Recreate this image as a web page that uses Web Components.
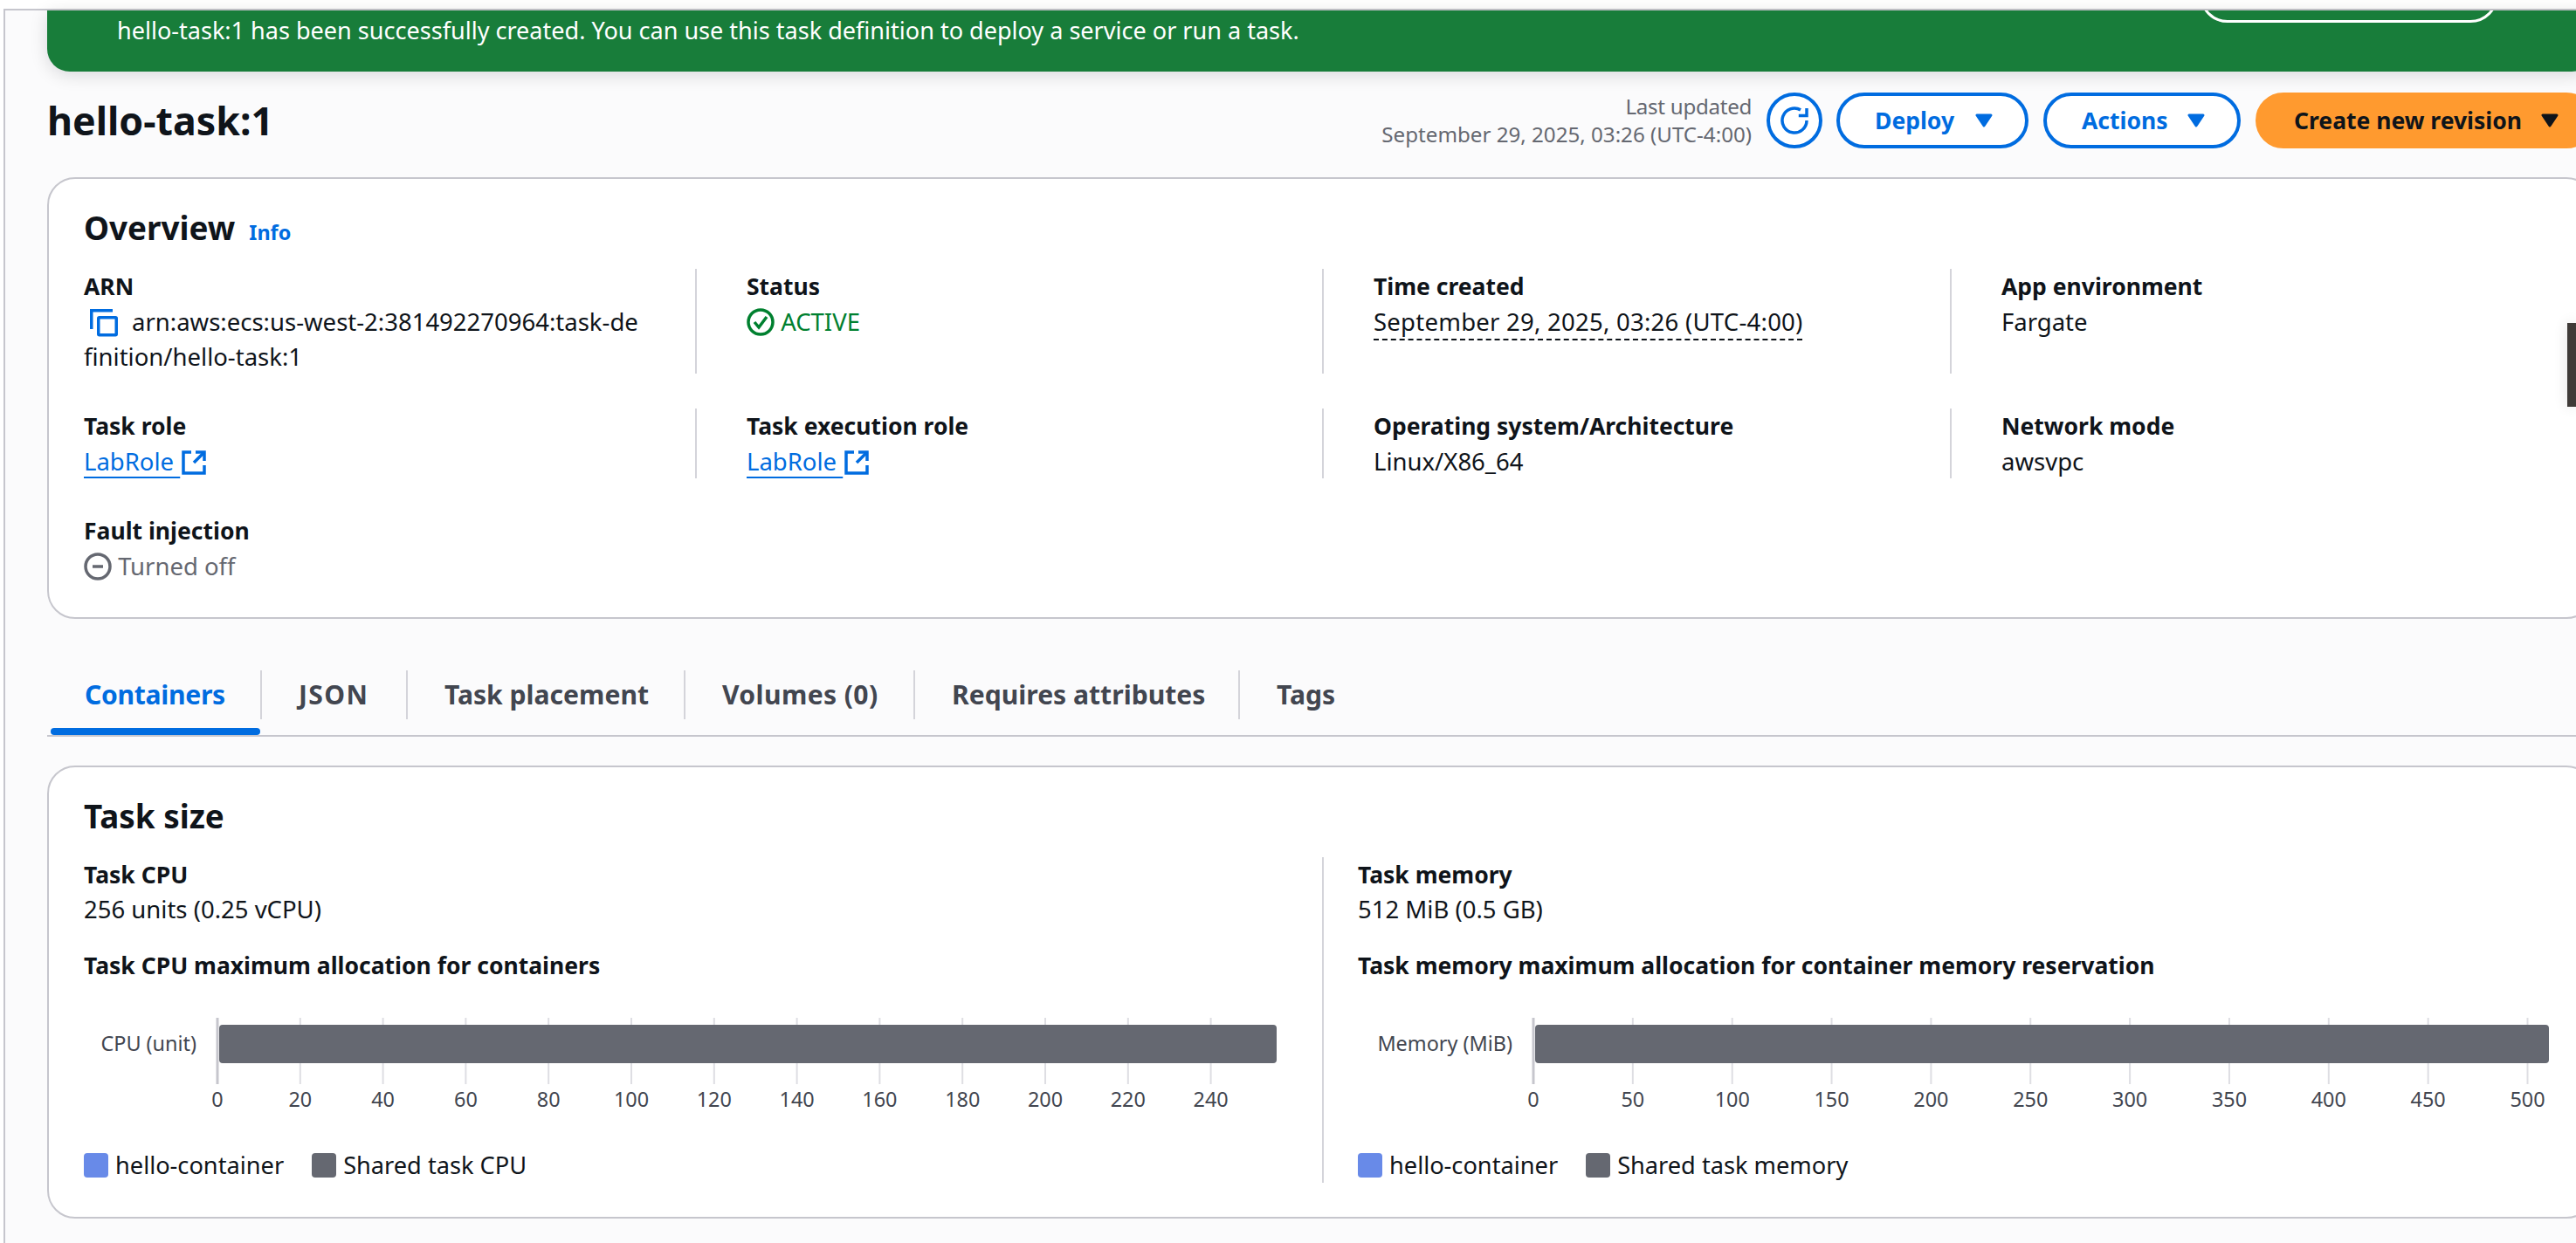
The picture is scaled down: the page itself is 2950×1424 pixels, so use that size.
<!DOCTYPE html>
<html lang="en"><head><meta charset="utf-8"><title>hello-task:1</title>
<style>
html,body{margin:0;padding:0;background:#fff}
body{font:27.5px/40px "Noto Sans",sans-serif;color:#0f141a;width:2950px;height:1424px;overflow:hidden}
</style></head><body>
<aws-app>
  <aws-flash>hello-task:1 has been successfully created. You can use this task definition to deploy a service or run a task.</aws-flash>
  <aws-header></aws-header>
  <aws-card heading="Overview" info>
    <aws-overview></aws-overview>
  </aws-card>
  <aws-tabs></aws-tabs>
  <aws-card heading="Task size">
    <aws-tasksize></aws-tasksize>
  </aws-card>
</aws-app>
<script>
function def(name, css, html){
  customElements.define(name, class extends HTMLElement{
    constructor(){super();const s=this.attachShadow({mode:'open'});s.innerHTML='<style>'+css+'</style>'+(typeof html==='function'?html(this):html);}
  });
}
const BLUE='#006ce0';
const caret=c=>`<svg width="20" height="16" viewBox="0 0 20 16" aria-hidden="true"><path d="M2 2h16l-8 12z" fill="${c}" stroke="${c}" stroke-width="3" stroke-linejoin="round"/></svg>`;

def('aws-app',`
:host{display:block;width:2950px;height:1424px;overflow:hidden;box-sizing:border-box;padding-top:10px;position:relative}
.frame{height:1414px;margin-left:4px;border-top:2px solid #c6c6cd;border-left:2px solid #c6c6cd;background:#fbfbfc;padding-left:48px;width:2946px;box-sizing:border-box}
.col{width:2917px;display:flex;flex-direction:column}
.tab{position:absolute;right:0;top:370px;width:10px;height:96px;background:#3f3b38;box-shadow:0 0 16px rgba(0,0,0,.12)}
`,`<div class="frame"><div class="col"><slot></slot></div></div><div class="tab"></div>`);

def('aws-flash',`
:host{display:flex;justify-content:space-between;align-items:flex-start;height:70px;box-sizing:border-box;padding:3px 110px 0 80px;background:#187d3a;color:#fff;border-radius:0 0 26px 26px;box-shadow:0 4px 20px rgba(0,7,22,.14);overflow:hidden;font-size:27.05px;line-height:40px}
.btn{width:342px;height:64px;margin-top:-53px;box-sizing:border-box;border:3px solid #fff;border-radius:32px}
`,`<div><slot></slot></div><div class="btn"></div>`);

def('aws-button',`
:host{display:inline-flex;align-items:center;justify-content:space-between;box-sizing:border-box;height:64px;border-radius:32px;padding:0 37px 0 40px;border:4px solid ${BLUE};color:${BLUE};font-weight:700;font-size:26.5px;background:#fff}
:host([primary]){background:#ff9a2f;border-color:#ff9a2f;color:#0f141a}
svg{display:block}
`,h=>`<slot></slot>${caret(h.hasAttribute('primary')?'#0f141a':BLUE)}`);

def('aws-header',`
:host{display:flex;align-items:center;height:64px;margin-top:24px;margin-bottom:33px}
h1{margin:0;font-size:44.7px;line-height:64px;font-weight:700;margin-right:auto}
.meta{text-align:right;color:#656871;font-size:24.15px;line-height:32px;margin-right:17px}
.meta span{letter-spacing:-.3px}
.refresh{box-sizing:border-box;width:64px;height:64px;border:4px solid ${BLUE};border-radius:50%;display:flex;align-items:center;justify-content:center;background:#fff;margin-right:16px}
aws-button.d{width:220px;margin-right:17px}
aws-button.a{width:226px;margin-right:17px}
aws-button.c{width:388px}
`,`<h1>hello-task:1</h1>
<div class="meta"><span>Last updated</span><br>September 29, 2025, 03:26 (UTC-4:00)</div>
<div class="refresh"><svg width="32" height="32" viewBox="0 0 16 16" fill="none" stroke="${BLUE}" stroke-width="1.75" aria-hidden="true"><path d="M15 8a7 7 0 1 1-3.5-6.06"/><path d="M15 1v4.2h-4.6"/></svg></div>
<aws-button class="d">Deploy</aws-button><aws-button class="a">Actions</aws-button><aws-button class="c" primary>Create new revision</aws-button>`);

def('aws-card',`
:host{display:block;box-sizing:border-box;background:#fff;border:2px solid #c6c6cd;border-radius:32px;padding:34px 0 39px 40px}
.h{display:flex;align-items:baseline;gap:16px;height:44px;margin-bottom:25px}
h2{margin:0;font-size:36.8px;line-height:44px;font-weight:700}
a{color:${BLUE};font-size:23.4px;font-weight:700;text-decoration:none}
`,h=>`<div class="h"><h2>${h.getAttribute('heading')}</h2>${h.hasAttribute('info')?'<a>Info</a>':''}</div><slot></slot>`);

def('aws-kv',`
:host{display:block;height:80px;box-sizing:border-box}
:host([div]){border-left:2px solid #d4d4da;padding-left:57px}
.k{font-weight:700;line-height:41px;font-size:26.5px}
.v{line-height:40px}
`,`<div class="k"><slot name="k"></slot></div><div class="v"><slot></slot></div>`);

const ext=`<svg width="28" height="28" viewBox="0 0 28 28" fill="none" stroke="${BLUE}" stroke-width="3.5" style="vertical-align:-5px;margin-left:2px" aria-hidden="true"><path d="M11 2H2v24h24v-9"/><path d="M16 2h10v10"/><path d="M26 2L14 14"/></svg>`;
def('aws-overview',`
:host{display:grid;grid-template-columns:700px 718px 719px 1fr;row-gap:40px;align-content:start}
aws-kv.t{height:120px}
a{color:${BLUE};text-decoration:underline;text-decoration-thickness:2px;text-underline-offset:7px}
.ic{display:inline-block;vertical-align:-6px}
.g{color:#00802f}.m{color:#656871}
.d{text-decoration:underline dashed 2px;text-underline-offset:9px}
`,`
<aws-kv class="t"><span slot="k">ARN</span><svg class="ic" style="margin:0 16px 0 7px;vertical-align:-7px" width="32" height="32" viewBox="0 0 32 32" fill="none" stroke="${BLUE}" stroke-width="3.5" aria-hidden="true"><path d="M26 1.75H1.75V23"/><rect x="9.75" y="9.75" width="20.5" height="20" rx="1"/></svg>arn:aws:ecs:us-west-2:381492270964:task-de<br>finition/hello-task:1</aws-kv>
<aws-kv class="t" div><span slot="k">Status</span><svg class="ic" width="32" height="32" viewBox="0 0 32 32" fill="none" stroke="#00802f" stroke-width="3.5" aria-hidden="true"><circle cx="16" cy="16" r="14"/><path d="M9 16l5 6 9-12"/></svg><span class="g"> ACTIVE</span></aws-kv>
<aws-kv class="t" div><span slot="k">Time created</span><span class="d" style="letter-spacing:.25px">September 29, 2025, 03:26 (UTC-4:00)</span></aws-kv>
<aws-kv class="t" div><span slot="k">App environment</span>Fargate</aws-kv>
<aws-kv><span slot="k">Task role</span><a>LabRole </a>${ext}</aws-kv>
<aws-kv div><span slot="k">Task execution role</span><a>LabRole </a>${ext}</aws-kv>
<aws-kv div><span slot="k">Operating system/Architecture</span>Linux/X86_64</aws-kv>
<aws-kv div><span slot="k">Network mode</span>awsvpc</aws-kv>
<aws-kv><span slot="k">Fault injection</span><svg class="ic" width="32" height="32" viewBox="0 0 32 32" fill="none" stroke="#656871" stroke-width="3.5" aria-hidden="true"><circle cx="16" cy="16" r="14"/><path d="M10 16h12"/></svg><span class="m"> Turned off</span></aws-kv>
`);

def('aws-tabs',`
:host{display:grid;grid-template-columns:244px 167px 318px 263px 372px 1fr;margin-top:59px;margin-bottom:33px;padding-bottom:18px;border-bottom:2px solid #c6c6cd;position:relative;margin-right:-3px}
div{height:56px;line-height:56px;padding-left:42px;font-weight:700;font-size:30.1px;color:#424650;border-left:2px solid #d4d4da;box-sizing:border-box}
div:first-of-type{border-left:none;color:${BLUE};padding-left:43px;letter-spacing:-.3px}
div:first-of-type::after{content:"";position:absolute;left:4px;width:240px;bottom:0;height:8px;background:${BLUE};border-radius:4px}
`,`<div>Containers</div><div style="letter-spacing:1.4px">JSON</div><div>Task placement</div><div style="letter-spacing:.4px">Volumes (0)</div><div>Requires attributes</div><div>Tags</div>`);

def('aws-chart',`
:host{display:block}
svg{display:block;overflow:visible}
text{font-family:"Noto Sans",sans-serif;font-size:23.4px;fill:#424650}
`,h=>{
  const ax=+h.getAttribute('axis'),sc=+h.getAttribute('scale'),step=+h.getAttribute('step'),end=+h.getAttribute('end'),top=+h.getAttribute('top');
  let s='';
  for(let v=step;v<=top;v+=step){const x=ax+v*sc;s+=`<line x1="${x}" x2="${x}" y1="40" y2="116" stroke="#dedee3" stroke-width="2"/>`;}
  s+=`<line x1="${ax}" x2="${ax}" y1="40" y2="116" stroke="#c6c6cd" stroke-width="3"/>`;
  s+=`<rect x="${ax+2}" y="48" width="${end-ax-2}" height="44" rx="4" fill="#656871"/>`;
  for(let v=0;v<=top;v+=step){const x=ax+v*sc;s+=`<text x="${x}" y="142" text-anchor="middle">${v}</text>`;}
  s+=`<text x="${ax-24}" y="78" text-anchor="end">${h.getAttribute('label')}</text>`;
  return `<svg width="1390" height="180" viewBox="0 0 1390 180">${s}</svg>`;
});

def('aws-legend',`
:host{display:flex;align-items:center;height:40px;margin-top:9px;font-size:27.2px}
i{display:block;width:28px;height:28px;border-radius:4px;background:#688ae8;margin-right:8px}
i.g{background:#656871}
span{margin-right:32px}
`,h=>`<i></i><span>hello-container</span><i class="g"></i><span>${h.getAttribute('second')}</span>`);

def('aws-tasksize',`
:host{display:grid;grid-template-columns:1418px 1fr}
.r{border-left:2px solid #d4d4da;padding-left:39px}
.k{font-weight:700;font-size:26.5px}
.a{font-weight:700;margin-top:24px;font-size:26.5px}
`,`<div class="l"><div class="k">Task CPU</div><div>256 units (0.25 vCPU)</div><div class="a">Task CPU maximum allocation for containers</div>
<aws-chart axis="153" scale="4.74" step="20" top="240" end="1366" label="CPU (unit)"></aws-chart><aws-legend second="Shared task CPU"></aws-legend></div>
<div class="r"><div class="k">Task memory</div><div>512 MiB (0.5 GB)</div><div class="a">Task memory maximum allocation for container memory reservation</div>
<aws-chart axis="201" scale="2.277" step="50" top="500" end="1364" label="Memory (MiB)"></aws-chart><aws-legend second="Shared task memory"></aws-legend></div>`);
</script>
</body></html>
